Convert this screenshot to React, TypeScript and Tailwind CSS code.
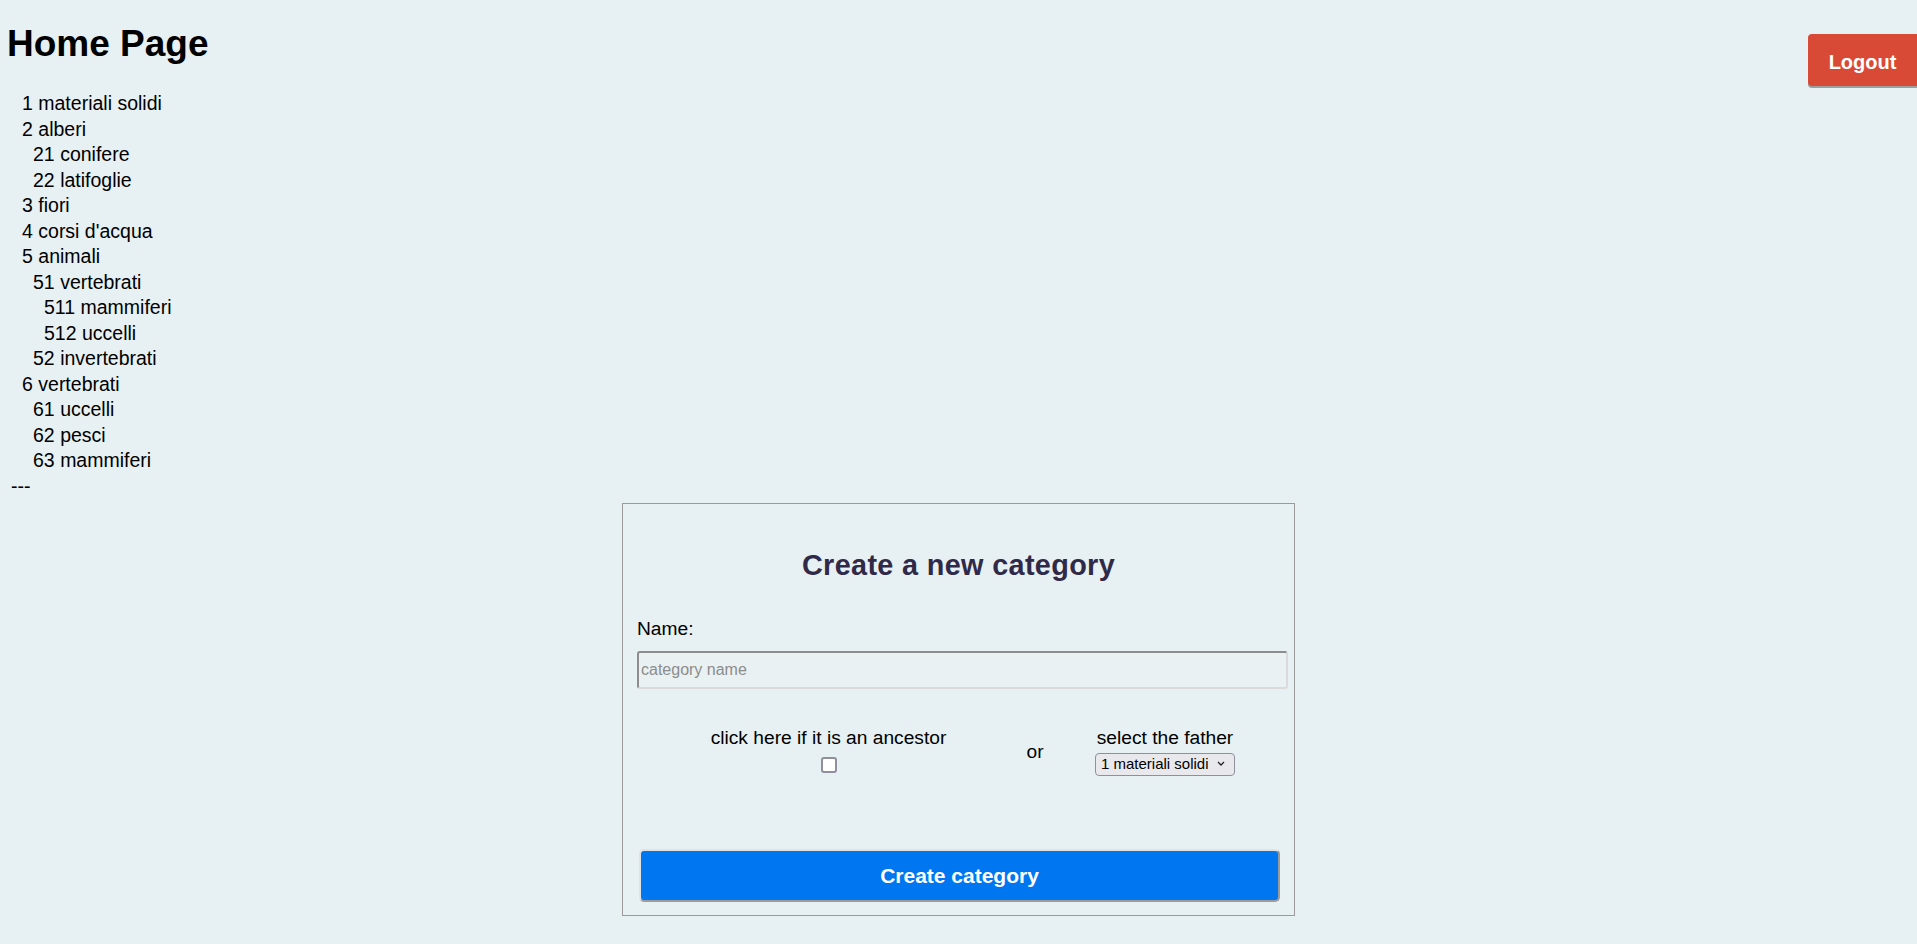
import { useState } from "react";

const categories = [
  { id: 1, name: "materiali solidi", level: 0 },
  { id: 2, name: "alberi", level: 0 },
  { id: 21, name: "conifere", level: 1 },
  { id: 22, name: "latifoglie", level: 1 },
  { id: 3, name: "fiori", level: 0 },
  { id: 4, name: "corsi d'acqua", level: 0 },
  { id: 5, name: "animali", level: 0 },
  { id: 51, name: "vertebrati", level: 1 },
  { id: 511, name: "mammiferi", level: 2 },
  { id: 512, name: "uccelli", level: 2 },
  { id: 52, name: "invertebrati", level: 1 },
  { id: 6, name: "vertebrati", level: 0 },
  { id: 61, name: "uccelli", level: 1 },
  { id: 62, name: "pesci", level: 1 },
  { id: 63, name: "mammiferi", level: 1 },
];

const indent = ["pl-[22px]", "pl-[33px]", "pl-[44px]"];

function CategoryTree() {
  return (
    <div className="mt-[25px] text-[19.5px] leading-[25.5px] text-black">
      {categories.map((c) => (
        <div key={c.id} className={indent[c.level]}>
          {c.id} {c.name}
        </div>
      ))}
      <div className="pl-[11px]">---</div>
    </div>
  );
}

function NewCategoryForm() {
  const [name, setName] = useState("");
  const [ancestor, setAncestor] = useState(false);
  const [father, setFather] = useState("1");

  return (
    <form
      className="mx-auto mt-[4px] w-[673px] border border-[#9a9a9a] px-[14px] pt-[44px] pb-[13px]"
      onSubmit={(e) => e.preventDefault()}
    >
      <h2 className="text-center text-[28.8px] leading-[34px] font-bold tracking-[0.35px] text-[#302a48]">
        Create a new category
      </h2>

      <label className="mt-[36px] block text-[19.2px] leading-[22px] text-black">
        Name:
      </label>
      <input
        value={name}
        onChange={(e) => setName(e.target.value)}
        placeholder="category name"
        className="mt-[11px] block h-[38px] w-[651px] rounded-[3px] border-2 border-t-[#8d8d8d] border-l-[#8d8d8d] border-r-[#dadada] border-b-[#dadada] bg-[#e9f1f3] px-[2px] text-[16px] text-black outline-none placeholder:text-[#8c8c8c]"
      />

      {/* ancestor / father row */}
      <div className="mt-[38px] grid grid-cols-[383px_30px_1fr] items-start text-[19.2px] leading-[22px] text-black">
        <div className="flex flex-col items-center">
          <span>click here if it is an ancestor</span>
          <input
            type="checkbox"
            checked={ancestor}
            onChange={(e) => setAncestor(e.target.checked)}
            className="mt-[8px] mb-[1px] h-[16px] w-[16px] appearance-none rounded-[3px] border-2 border-[#8f8f9d] bg-white checked:bg-[#0077f0]"
          />
        </div>
        <div className="mt-[14px] text-center">or</div>
        <div className="flex flex-col items-center">
          <span>select the father</span>
          <div className="relative mt-[3px] h-[23px] w-[140px]">
            <select
              value={father}
              onChange={(e) => setFather(e.target.value)}
              className="h-full w-full appearance-none rounded-[4px] border border-[#8f8f9d] bg-[#e9e9ed] pl-[5px] text-[15px] leading-[20px] text-black outline-none"
            >
              {categories.map((c) => (
                <option key={c.id} value={c.id}>
                  {c.id} {c.name}
                </option>
              ))}
            </select>
            <svg
              className="pointer-events-none absolute top-[9px] right-[10px]"
              width="8"
              height="5"
              viewBox="0 0 8 5"
              fill="none"
            >
              <path d="M1 1l3 3 3-3" stroke="#222" strokeWidth="1.3" />
            </svg>
          </div>
        </div>
      </div>

      <button
        type="submit"
        className="mt-[74px] ml-[2px] block h-[53px] w-[641px] rounded-[5px] border-2 border-t-[#e2e2e2] border-l-[#e2e2e2] border-r-[#9c9c9c] border-b-[#9c9c9c] bg-[#0077f0] text-[21px] font-bold text-white"
      >
        Create category
      </button>
    </form>
  );
}

export default function App() {
  return (
    <div className="min-h-screen bg-[#e7f0f2] pb-[28px] font-['Liberation_Sans',Arial,sans-serif] text-black">
      <header className="flex h-[66px] items-start justify-between pt-[22px]">
        <h1 className="pl-[7px] text-[37px] leading-[44px] font-bold">Home Page</h1>
        <button className="mt-[12px] h-[52px] w-[109px] shrink-0 rounded-l-[4px] bg-[#d94a36] pt-[4px] text-[20px] font-bold text-white shadow-[0_2px_0_#9e9e9e]">
          Logout
        </button>
      </header>

      <CategoryTree />
      <NewCategoryForm />
    </div>
  );
}
